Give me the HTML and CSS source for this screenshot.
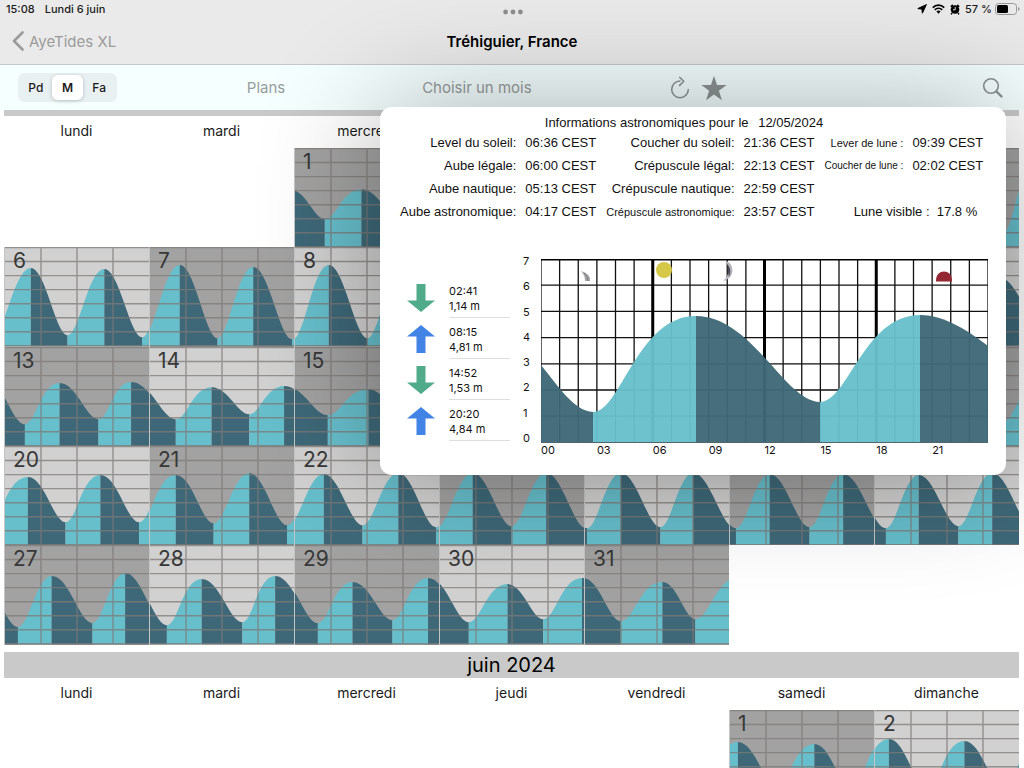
FILE: index.html
```html
<!DOCTYPE html>
<html lang="fr">
<head>
    <meta charset="UTF-8">
    <meta name="viewport" content="width=device-width, initial-scale=1.0">
    <title>AyeTides XL</title>
    <link rel="stylesheet" href="styles.css">
</head>
<body>
<header class="header">
    <div class="status">
        <div class="status-left"><span>15:08</span><span>Lundi 6 juin</span></div>
        <svg class="dots" width="20" height="6" viewBox="0 0 20 6"><circle cx="2.6" cy="3" r="2.4"/><circle cx="10" cy="3" r="2.4"/><circle cx="17.4" cy="3" r="2.4"/></svg>
        <div class="status-right">
            <svg width="10" height="10" viewBox="0 0 10 10"><path d="M9.4.6 5.4 9.2 4.9 5.1.8 4.6z" stroke="#000" stroke-linejoin="round"/></svg>
            <svg width="13" height="10" viewBox="0 0 13 10"><path d="M.8 3.6a8 8 0 0 1 11.4 0M2.8 5.8a5.2 5.2 0 0 1 7.4 0" fill="none" stroke="#000" stroke-width="1.7"/><path d="M6.5 9.8 4.4 7.6a3 3 0 0 1 4.2 0z"/></svg>
            <svg width="10" height="11" viewBox="0 0 10 11"><circle cx="5" cy="5.5" r="4.3"/><path d="M.8 2.8 2.8.9M9.2 2.8 7.2.9M2 9l-.9 1.4M8 9l.9 1.4" stroke="#000" stroke-width="1.5"/><path d="M5.2 3v2.8H3" fill="none" stroke="#e6e6e6"/></svg>
            <span class="percent">57 %</span>
            <svg class="battery" width="25" height="12" viewBox="0 0 25 12"><rect x=".5" y=".5" width="21" height="11" rx="3" fill="none" stroke="#999"/><rect x="2" y="2" width="11" height="8" rx="1.5"/><path d="M23 4v4q1.600-.6 1.600-2T23 4" fill="#999"/></svg>
        </div>
    </div>
    <nav class="navbar">
        <a class="back" href="#">
            <svg width="12" height="20" viewBox="0 0 12 20"><path d="M10.500 1.500 2 10l8.500 8.500" fill="none" stroke="#9b9b9b" stroke-width="2.600" stroke-linecap="round" stroke-linejoin="round"/></svg>
            <span>AyeTides XL</span>
        </a>
        <h1 class="place">Tréhiguier, France</h1>
    </nav>
</header>

<div class="toolbar">
    <div class="segmented">
        <button type="button">Pd</button>
        <button type="button" class="selected" aria-pressed="true">M</button>
        <button type="button">Fa</button>
    </div>
    <button type="button" class="link-button">Plans</button>
    <button type="button" class="link-button">Choisir un mois</button>
    <div class="tools">
        <button type="button" class="icon-button" aria-label="Actualiser">
            <svg width="20" height="24" viewBox="0 0 20 24"><path d="M10 5.100A8.300 8.300 0 1 0 18.300 13.400M9.600 1.200 13.800 5.300 9.600 9.400" fill="none" stroke="#8c9393" stroke-width="1.500" stroke-linecap="round" stroke-linejoin="round"/></svg>
        </button>
        <button type="button" class="icon-button" aria-label="Favori">
            <svg width="26" height="26" viewBox="0 0 26 26"><path d="m13 .8 3 9.200h9.700l-7.800 5.800 3 9.400L13 19.400l-7.900 5.800 3-9.400L.3 10H10z" fill="#8c9393"/></svg>
        </button>
        <button type="button" class="icon-button search" aria-label="Rechercher">
            <svg width="22" height="22" viewBox="0 0 22 22"><circle cx="9" cy="9" r="7.300" fill="none" stroke="#8c9393" stroke-width="1.600"/><path d="m14.500 14.500 5 5" stroke="#8c9393" stroke-width="2.400" stroke-linecap="round"/></svg>
        </button>
    </div>
</div>

<main class="calendar">
    <div class="months" id="months"></div>
</main>

<section class="popup">
    <h2 class="popup-title">Informations astronomiques pour le <time>12/05/2024</time></h2>
    <table class="astro">
        <tr><th>Level du soleil:</th><td>06:36 CEST</td><th>Coucher du soleil:</th><td>21:36 CEST</td><th class="small">Lever de lune :</th><td>09:39 CEST</td></tr>
        <tr><th>Aube légale:</th><td>06:00 CEST</td><th>Crépuscule légal:</th><td>22:13 CEST</td><th class="tiny">Coucher de lune :</th><td>02:02 CEST</td></tr>
        <tr><th>Aube nautique:</th><td>05:13 CEST</td><th>Crépuscule nautique:</th><td>22:59 CEST</td><td colspan="2"></td></tr>
        <tr><th>Aube astronomique:</th><td>04:17 CEST</td><th class="small">Crépuscule astronomique:</th><td>23:57 CEST</td><td colspan="2" class="moon">Lune visible :&nbsp; 17.8 %</td></tr>
    </table>
    <div class="day">
        <ul class="tides">
            <li><svg class="low" width="28" height="28" viewBox="0 0 28 28"><path d="M9.500 0h9v16.500H28L14 28 0 16.500h9.500z"/></svg><p>02:41<br>1,14 m</p></li>
            <li><svg class="high" width="28" height="28" viewBox="0 0 28 28"><path d="M9.500 28h9V11.500H28L14 0 0 11.500h9.500z"/></svg><p>08:15<br>4,81 m</p></li>
            <li><svg class="low" width="28" height="28" viewBox="0 0 28 28"><path d="M9.500 0h9v16.500H28L14 28 0 16.500h9.500z"/></svg><p>14:52<br>1,53 m</p></li>
            <li><svg class="high" width="28" height="28" viewBox="0 0 28 28"><path d="M9.500 28h9V11.500H28L14 0 0 11.500h9.500z"/></svg><p>20:20<br>4,84 m</p></li>
        </ul>
        <div class="y-axis"><span>7</span><span>6</span><span>5</span><span>4</span><span>3</span><span>2</span><span>1</span><span>0</span></div>
        <div class="chart">
            <svg class="plot" viewBox="0 0 447 184" preserveAspectRatio="none">
                <g id="plotGrid"></g>
                <!-- moonrise / moonset -->
                <path d="M40 12q10 3 9 10l-5 0q0-6-4-10" fill="#a4a4a9"/><path d="M43 14q4 3 4 8" fill="none" stroke="#77777d"/>
                <path d="M183 1q8 2 8.500 10.500Q191 20 182 22q5-4 5.500-10Q188 5 183 1" fill="#b5b5bb"/><path d="M187 6q4 5 1 12l-1-5z" fill="#4c4c56"/>
                <circle cx="123" cy="11" r="8" fill="#d5c748"/>
                <path d="M395 22.500v-2a8 8 0 0 1 16 0v2z" fill="#932733"/>
                <g fill-opacity=".96">
                    <path class="falling" d="M0 106C18 128 33 152 52 153V184H0z"/>
                    <path class="rising" d="M52 153C80 153 96 57 155 57V184H52z"/>
                    <path class="falling" d="M155 57C211 57 244 143 279 143V184H155z"/>
                    <path class="rising" d="M279 143C307 143 323 56 379 56V184H279z"/>
                    <path class="falling" d="M379 56C405 56 430 74 447 87V184H379z"/>
                </g>
                <path class="baseline" d="M0 183.500H447"/>
            </svg>
            <div class="x-axis"><span>00</span><span>03</span><span>06</span><span>09</span><span>12</span><span>15</span><span>18</span><span>21</span></div>
        </div>
    </div>
</section>
<script src="calendar.js"></script>
</body>
</html>
```

FILE: styles.css
```css
* {
    box-sizing: border-box;
}
body {
    margin: 0;
    height: 100vh;
    overflow: hidden;
    position: relative;
    display: flex;
    flex-direction: column;
    background: #fff;
    color: #1a1a1a;
    font-family: Inter, "Liberation Sans", sans-serif;
}
button {
    font: inherit;
    color: inherit;
    border: 0;
    padding: 0;
    background: none;
    cursor: pointer;
}
svg {
    display: block;
    flex: none;
}

/* status bar and title */
.header {
    background: #eaeaea;
    border-bottom: 1px solid #c3c9cc;
}
.status {
    height: 18px;
    padding: 0 4px 0 6px;
    display: grid;
    grid-template-columns: 1fr auto 1fr;
    align-items: center;
    font-size: 11px;
    font-weight: 500;
}
.status-left {
    display: flex;
    gap: 10px;
}
.dots {
    fill: #8e8e8e;
    margin-top: 6px;
}
.status-right {
    display: flex;
    justify-content: flex-end;
    align-items: center;
    gap: 5px;
}
.battery {
    margin-left: -2px;
}
.navbar {
    height: 46px;
    padding: 0 12px;
    display: grid;
    grid-template-columns: 1fr auto 1fr;
    align-items: center;
}
.back {
    display: flex;
    align-items: center;
    gap: 5px;
    color: #9b9b9b;
    font-size: 15px;
    text-decoration: none;
}
.place {
    margin: 0;
    color: #000;
    font-size: 15px;
    font-weight: 600;
}

.toolbar {
    height: 45px;
    padding-right: 20px;
    display: grid;
    grid-template-columns: 16fr 21fr 21fr 42fr;
    align-items: center;
    background: #f5ffff;
}
.segmented {
    width: 99px;
    height: 29px;
    margin-left: 18px;
    padding: 2px;
    display: flex;
    border-radius: 7px;
    background: #e8f0f2;
    font-size: 12px;
    font-weight: 500;
}
.segmented button {
    flex: 1;
    border-radius: 6px;
}
.segmented .selected {
    background: #fff;
    box-shadow: 0 1px 4px rgba(0, 0, 0, 0.2);
    font-weight: 600;
}
.link-button {
    color: #979c9c;
    font-size: 15px;
}
.tools {
    display: flex;
    align-items: center;
    gap: 11px;
    padding-left: 88px;
}
.search {
    margin-left: auto;
}

/* months */
.calendar {
    flex: 1;
    min-height: 0;
    overflow: hidden;
    padding: 0 5px 0 4px;
}
/* scrolled so that the first title is nearly out of view */
.months {
    margin-top: -20px;
}
.month {
    width: 100%;
    margin-bottom: 7px;
    border-spacing: 0;
    table-layout: fixed;
}
.month caption {
    height: 26px;
    background: #c9c9c9;
    color: #000;
    font-size: 20px;
    line-height: 26px;
}
.month th {
    height: 32px;
    padding: 0 0 3px;
    font-size: 14px;
    font-weight: 400;
}
.month td {
    padding: 0;
}
.cell {
    aspect-ratio: 146 / 100;
    display: grid;
    background: #a2a2a2;
    border-left: 1px solid #c4c4c4;
}
.cell.even {
    background: #d1d1d1;
}
.cell svg,
.cell span {
    grid-area: 1 / 1;
}
.cell svg {
    width: 100%;
    height: 100%;
    min-height: 0;
}
.cell span {
    padding: 0 8px;
    color: #383838;
    font-size: 21px;
    line-height: 28px;
}
.rising {
    fill: #67bfcc;
}
.falling {
    fill: #3e6878;
}
.lines {
    fill: none;
    stroke: #7d7977;
    stroke-opacity: 0.75;
    stroke-width: 1.4;
}

/* day details */
.popup {
    position: absolute;
    z-index: 2;
    top: 107px;
    right: 18px;
    width: 626px;
    padding: 7px 18px 18px 20px;
    border-radius: 12px;
    background: #fff;
    box-shadow: 0 0 120px rgba(0, 0, 0, 0.32);
    color: #111;
    font-family: "Liberation Sans", Arial, sans-serif;
    font-size: 13px;
}
.popup-title {
    margin: 0;
    padding-right: 20px;
    text-align: center;
    font-size: 13px;
    font-weight: 400;
    line-height: 17px;
}
.popup-title time {
    margin-left: 6px;
}
.astro {
    border-spacing: 0;
}
.astro tr {
    height: 23px;
}
.astro th {
    padding: 0 9px 0 0;
    font-weight: 400;
    text-align: right;
    white-space: nowrap;
}
.astro td {
    padding: 0 10px 0 0;
    white-space: nowrap;
}
.astro .small {
    font-size: 11px;
}
.astro .tiny {
    font-size: 10px;
}
.astro .moon {
    padding-right: 16px;
    text-align: right;
}
.day {
    margin-top: 36px;
    display: flex;
    font-family: Inter, "Liberation Sans", sans-serif;
    font-size: 11px;
}
.tides {
    width: 103px;
    margin: 18px 13px 0 7px;
    padding: 0;
    list-style: none;
}
.tides li {
    height: 41px;
    display: flex;
    align-items: center;
    gap: 14px;
}
.tides p {
    flex: 1;
    height: 41px;
    margin: 0;
    padding-top: 7px;
    border-bottom: 1px solid #dedede;
    line-height: 15px;
}
.low {
    fill: #4fab89;
}
.high {
    fill: #4284e6;
}
.y-axis {
    width: 18px;
    height: 190px;
    margin-top: -4px;
    display: flex;
    flex-direction: column;
    justify-content: space-between;
    line-height: 13px;
}
.chart {
    flex: 1;
}
.plot {
    width: 100%;
    height: 184px;
}
.grid-line {
    fill: none;
    stroke: #111;
    stroke-width: 1.3;
}
.grid-bold {
    fill: none;
    stroke: #000;
    stroke-width: 3;
}
.baseline {
    stroke: #53666e;
}
.x-axis {
    display: grid;
    grid-template-columns: repeat(8, 1fr);
    line-height: 14px;
}
```

FILE: calendar.js
```js
var DAYS = ["lundi", "mardi", "mercredi", "jeudi", "vendredi", "samedi", "dimanche"];
var COL = 145;
var ROW = 99;

// Each week holds its tide turns as x, y pairs, starting with a high tide.
// x runs over the whole week (7 * COL), y is measured down from the top of the row.
var MAY = [
    { first: -1, from: 2, to: 6, turns: [286,42, 320,71, 357,41, 395,70, 433,40, 471,72, 509,38, 546,74, 584,36, 622,76, 660,33, 697,79, 734,30, 772,82, 809,27, 847,84, 884,24, 923,85, 960,22, 999,86, 1027,21] },
    { first: 6, from: 0, to: 6, turns: [26,21, 63,88, 100,22, 138,90, 175,18, 213,91, 249,20, 288,92, 324,18, 363,91, 399,20, 437,90, 474,20, 512,88, 549,21, 587,86, 625,23, 662,84, 699,25, 737,84, 774,27, 812,84, 848,28, 888,82, 921,30, 961,77, 994,30, 1037,77], lead: [-12,87] },
    { first: 13, from: 0, to: 6, turns: [-21,30, 20,77, 55,36, 94,72, 127,35, 171,72, 207,40, 245,67, 280,39, 323,68, 364,42, 399,68, 439,42, 476,67, 515,41, 553,67, 591,39, 629,68, 663,37, 701,69, 738,35, 776,71, 814,33, 852,72, 889,32, 926,73, 963,31, 999,74, 1038,31] },
    { first: 20, from: 0, to: 6, turns: [23,31, 61,76, 96,29, 135,76, 171,29, 209,77, 245,27, 283,79, 319,28, 358,79, 394,27, 432,81, 468,27, 507,80, 542,27, 582,82, 616,27, 656,81, 689,27, 731,82, 765,28, 805,81, 839,28, 881,82, 914,29, 954,80, 988,27, 1029,82], lead: [-16,75] },
    { first: 27, from: 0, to: 4, turns: [-28,28, 13,82, 47,31, 88,78, 121,28, 162,80, 197,34, 238,77, 271,31, 313,78, 348,37, 388,75, 424,33, 464,77, 503,39, 539,74, 578,33, 616,76, 658,37, 691,74, 736,32] }
];
var JUNE = [
    { first: -4, from: 5, to: 6, turns: [733,32, 772,76, 810,34, 847,78, 884,29, 922,78, 960,31, 999,78, 1037,29], lead: [696,75] }
];

// Filled area between two tide turns
function segment(x0, y0, x1, y1) {
    var rising = y1 < y0;
    var neap = Math.abs(y1 - y0) < 50;
    var a = rising ? 0.32 : (neap ? 0.44 : 0.4);
    var b = rising ? (neap ? 0.46 : 0.56) : 0.68;
    var w = x1 - x0;
    return '<path class="' + (rising ? "rising" : "falling") + '" d="M' + x0 + " " + y0 +
        "C" + (x0 + w * a) + " " + y0 + " " + (x0 + w * b) + " " + y1 + " " + x1 + " " + y1 +
        "V" + ROW + "H" + x0 + 'z"/>';
}

function dayCell(week, col) {
    var points = (week.lead || []).concat(week.turns);
    var left = col * COL;
    var svg = "";
    for (var i = 0; i + 3 < points.length; i += 2) {
        if (points[i + 2] > left && points[i] < left + COL) {
            svg += segment(points[i], points[i + 1], points[i + 2], points[i + 3]);
        }
    }
    var lines = "";
    for (var q = 1; q < 4; q++) {
        lines += "M" + (left + q * COL / 4) + " 0V" + ROW;
    }
    for (var h = 0; h <= 7; h++) {
        lines += "M" + left + " " + (0.5 + h * 14) + "h" + COL;
    }
    var date = week.first + col;
    return '<td><div class="cell' + (date % 2 === 0 ? " even" : "") + '">' +
        '<svg viewBox="' + left + " 0 " + COL + " " + ROW + '" preserveAspectRatio="none">' + svg +
        '<path class="lines" d="' + lines + '"/></svg><span>' + date + "</span></div></td>";
}

function month(title, weeks) {
    var html = '<table class="month"><caption>' + title + "</caption><thead><tr>";
    DAYS.forEach(function (day) {
        html += '<th scope="col">' + day + "</th>";
    });
    html += "</tr></thead><tbody>";
    weeks.forEach(function (week) {
        html += "<tr>";
        for (var col = 0; col < 7; col++) {
            html += col >= week.from && col <= week.to ? dayCell(week, col) : "<td></td>";
        }
        html += "</tr>";
    });
    return html + "</tbody></table>";
}

document.getElementById("months").innerHTML = month("", MAY) + month("juin 2024", JUNE);

// Hour and metre grid of the day chart
var thin = "";
var bold = "";
for (var hour = 0; hour <= 24; hour++) {
    var x = hour * 447 / 24;
    if (hour % 6 === 0 && hour > 0 && hour < 24) {
        bold += "M" + x + " 0V184";
    } else {
        thin += "M" + x + " 0V184";
    }
}
for (var metre = 1; metre < 7; metre++) {
    thin += "M0 " + (metre * 26.2) + "H447";
}
document.getElementById("plotGrid").innerHTML =
    '<path class="grid-line" d="' + thin + '"/><path class="grid-bold" d="' + bold + 'M0 0H447"/>';
```
